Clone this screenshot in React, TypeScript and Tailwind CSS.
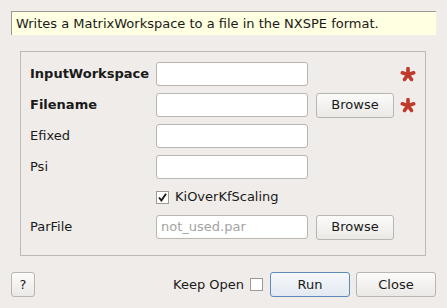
import React from 'react';

const RequiredStar = () => (
  <svg width="16" height="16" viewBox="0 0 16 16" className="shrink-0">
    <g stroke="#c0392b" strokeWidth="3.6" strokeLinecap="round" transform="translate(8 8.6)">
      <line x1="0" y1="0" x2="0" y2="-6" />
      <line x1="0" y1="0" x2="0" y2="-6" transform="rotate(72)" />
      <line x1="0" y1="0" x2="0" y2="-6" transform="rotate(144)" />
      <line x1="0" y1="0" x2="0" y2="-6" transform="rotate(216)" />
      <line x1="0" y1="0" x2="0" y2="-6" transform="rotate(288)" />
    </g>
  </svg>
);

const TextBox = ({ placeholder }: { placeholder?: string }) => (
  <div className="w-[152px] h-[24px] bg-white border border-[#b9b5b0] rounded-[3px] flex items-center px-[4px] text-[#a3a3a3] shrink-0">
    {placeholder}
  </div>
);

const Button = ({ label, width, primary = false }: { label: string; width: string; primary?: boolean }) => (
  <div
    className={`${width} h-[25px] rounded-[3px] border flex items-center justify-center shrink-0 bg-gradient-to-b ${
      primary ? 'border-[#5d8ab8] from-[#f5f8fb] to-[#e2e9f0]' : 'border-[#b9b5b0] from-[#fbfbfa] to-[#ebe9e6]'
    }`}
  >
    {label}
  </div>
);

interface Row {
  label: string;
  bold?: boolean;
  browse?: boolean;
  required?: boolean;
  placeholder?: string;
}

const rows: Row[] = [
  { label: 'InputWorkspace', bold: true, required: true },
  { label: 'Filename', bold: true, browse: true, required: true },
  { label: 'Efixed' },
  { label: 'Psi' },
];

const FieldRow = ({ row }: { row: Row }) => (
  <div className="flex items-center h-[24px]">
    <div className={`w-[126px] shrink-0 ${row.bold ? 'font-bold' : ''}`}>{row.label}</div>
    <TextBox placeholder={row.placeholder} />
    {row.browse ? (
      <div className="ml-[8px]">
        <Button label="Browse" width="w-[78px]" />
      </div>
    ) : (
      <div className="w-[86px] shrink-0" />
    )}
    {row.required && (
      <div className="ml-[6px]">
        <RequiredStar />
      </div>
    )}
  </div>
);

export default function App() {
  return (
    <div
      className="w-[447px] h-[308px] bg-[#efece9] text-[13px] text-[#1a1a1a] overflow-hidden"
      style={{ fontFamily: '"DejaVu Sans", sans-serif' }}
    >
      {/* Algorithm description */}
      <div className="mx-[11px] pt-[11px]">
        <div className="h-[24px] bg-[#ffffe1] border-l border-t border-[#9c9a96] flex items-center pl-[4px]">
          Writes a MatrixWorkspace to a file in the NXSPE format.
        </div>
      </div>

      {/* Properties group */}
      <div className="ml-[20px] mt-[16px] w-[406px] h-[205px] border border-[#bdb9b4] pt-[10px] pl-[9px] flex flex-col gap-[7px]">
        {rows.map((row) => (
          <FieldRow key={row.label} row={row} />
        ))}
        <div className="flex items-center h-[22px] pl-[126px]">
          <div className="w-[13px] h-[13px] bg-white border border-[#9e9a95] flex items-center justify-center">
            <svg width="11" height="11" viewBox="0 0 11 11">
              <path d="M2 5.5 L4.4 8.5 L9 1.8" fill="none" stroke="#1a1a1a" strokeWidth="1.9" />
            </svg>
          </div>
          <span className="ml-[6px]">KiOverKfScaling</span>
        </div>
        <div className="flex items-center h-[24px]">
          <div className="w-[126px] shrink-0">ParFile</div>
          <TextBox placeholder="not_used.par" />
          <div className="ml-[8px]">
            <Button label="Browse" width="w-[78px]" />
          </div>
        </div>
      </div>

      {/* Bottom buttons */}
      <div className="flex items-center mt-[16px] px-[11px]">
        <Button label="?" width="w-[24px]" />
        <div className="flex-1" />
        <span>Keep Open</span>
        <div className="ml-[6px] w-[13px] h-[13px] bg-white border border-[#9e9a95]" />
        <div className="ml-[7px]">
          <Button label="Run" width="w-[80px]" primary />
        </div>
        <div className="ml-[6px]">
          <Button label="Close" width="w-[80px]" />
        </div>
      </div>
    </div>
  );
}
